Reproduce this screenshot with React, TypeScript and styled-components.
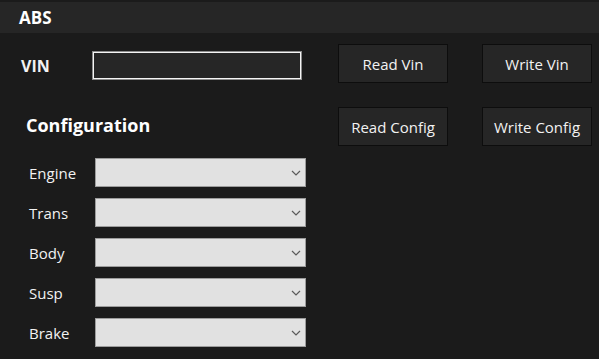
import React from "react";
import styled, { createGlobalStyle } from "styled-components";

const GlobalStyle = createGlobalStyle`
  html, body {
    margin: 0;
    padding: 0;
    background: #1b1b1b;
  }
  body {
    font-family: "Open Sans", "Noto Sans", sans-serif;
    color: #f2f2f2;
  }
`;

const Page = styled.div`
  width: 599px;
  height: 359px;
  background: #1b1b1b;
  padding-top: 2px;
  box-sizing: border-box;
  overflow: hidden;
`;

const Header = styled.div`
  height: 31px;
  background: #262626;
  display: flex;
  align-items: center;
  padding-left: 19px;
  font-size: 17px;
  font-weight: 700;
  color: #ffffff;
`;

const ActionRow = styled.div<{ top: number }>`
  display: grid;
  grid-template-columns: 304px 110px 110px;
  column-gap: 34px;
  height: 39px;
  margin-top: ${(p) => p.top}px;
`;

const LeadCell = styled.div<{ indent: number }>`
  display: flex;
  align-items: center;
  padding-left: ${(p) => p.indent}px;
`;

const FieldLabel = styled.span`
  width: 71px;
  font-size: 16px;
  font-weight: 700;
  margin-top: 4px;
`;

const VinInput = styled.div`
  width: 210px;
  height: 29px;
  flex-shrink: 0;
  box-sizing: border-box;
  margin-top: 4px;
  background: #262626;
  border: 1px solid #8c8c8c;
  box-shadow: inset 0 0 0 1px #f4f4f4;
`;

const SectionTitle = styled.span`
  font-size: 18px;
  font-weight: 700;
  color: #ffffff;
  margin-bottom: 4px;
`;

const Button = styled.button`
  width: 110px;
  height: 39px;
  box-sizing: border-box;
  background: #262626;
  border: 1px solid #0d0d0d;
  color: #f2f2f2;
  font-family: "Open Sans", "Noto Sans", sans-serif;
  font-size: 15px;
  padding: 0;
  cursor: pointer;
`;

const ConfigList = styled.div`
  display: flex;
  flex-direction: column;
  gap: 11px;
  margin-top: 12px;
  padding-left: 29px;
`;

const ConfigRow = styled.div`
  display: flex;
  align-items: center;
  height: 29px;
`;

const ConfigLabel = styled.span`
  width: 66px;
  font-size: 15px;
`;

const Combo = styled.div`
  width: 211px;
  height: 29px;
  box-sizing: border-box;
  background: #e1e1e1;
  border: 1px solid #9c9c9c;
  display: flex;
  align-items: center;
  justify-content: flex-end;
  padding-right: 4px;
`;

const Chevron = () => (
  <svg width="10" height="6" viewBox="0 0 10 6">
    <path d="M1 1 L5 5 L9 1" fill="none" stroke="#5a5a5a" strokeWidth="1.2" />
  </svg>
);

const fields = ["Engine", "Trans", "Body", "Susp", "Brake"];

export default function App() {
  return (
    <Page>
      <GlobalStyle />
      <Header>ABS</Header>
      <ActionRow top={11}>
        <LeadCell indent={21}>
          <FieldLabel>VIN</FieldLabel>
          <VinInput />
        </LeadCell>
        <Button>Read Vin</Button>
        <Button>Write Vin</Button>
      </ActionRow>
      <ActionRow top={24}>
        <LeadCell indent={26}>
          <SectionTitle>Configuration</SectionTitle>
        </LeadCell>
        <Button>Read Config</Button>
        <Button>Write Config</Button>
      </ActionRow>
      <ConfigList>
        {fields.map((f) => (
          <ConfigRow key={f}>
            <ConfigLabel>{f}</ConfigLabel>
            <Combo>
              <Chevron />
            </Combo>
          </ConfigRow>
        ))}
      </ConfigList>
    </Page>
  );
}
